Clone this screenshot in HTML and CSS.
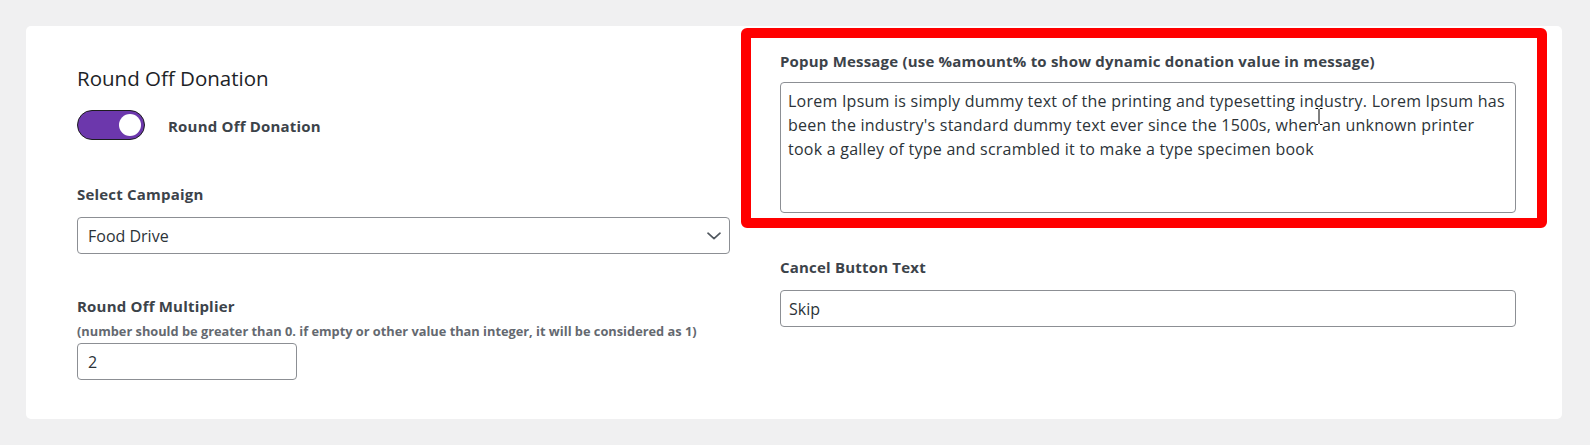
FILE: index.html
```html
<!DOCTYPE html>
<html lang="en">
<head>
  <meta charset="UTF-8" />
  <meta name="viewport" content="width=device-width, initial-scale=1.0" />
  <title>Round Off Donation Settings</title>
  <link rel="stylesheet" href="styles.css">
</head>
<body>
  <div class="settings-card">
    <div class="col col-left">
      <h2 class="section-title">Round Off Donation</h2>

      <div class="toggle-row">
        <label class="switch">
          <input type="checkbox" checked>
          <span class="knob"></span>
        </label>
        <span class="toggle-label">Round Off Donation</span>
      </div>

      <div class="field field-campaign">
        <label class="field-label" for="campaign">Select Campaign</label>
        <div class="select-wrap">
          <select id="campaign">
            <option>Food Drive</option>
            <option>Clean Water</option>
            <option>School Supplies</option>
          </select>
          <svg class="chevron" width="14" height="8" viewBox="0 0 14 8">
            <path d="M1 1.2 L7 6.6 L13 1.2" fill="none" stroke="#50575e" stroke-width="1.7" stroke-linecap="round" stroke-linejoin="round"/>
          </svg>
        </div>
      </div>

      <div class="field field-multiplier">
        <label class="field-label" for="multiplier">Round Off Multiplier</label>
        <p class="hint">(number should be greater than 0. if empty or other value than integer, it will be considered as 1)</p>
        <input id="multiplier" class="input input-small" type="text" value="2">
      </div>
    </div>

    <div class="col col-right">
      <div class="field">
        <label class="field-label" for="popup-message">Popup Message (use %amount% to show dynamic donation value in message)</label>
        <textarea id="popup-message" class="textarea">Lorem Ipsum is simply dummy text of the printing and typesetting industry. Lorem Ipsum has been the industry's standard dummy text ever since the 1500s, when an unknown printer took a galley of type and scrambled it to make a type specimen book</textarea>
      </div>

      <div class="field field-cancel">
        <label class="field-label" for="cancel-text">Cancel Button Text</label>
        <input id="cancel-text" class="input input-wide" type="text" value="Skip">
      </div>
    </div>

    <!-- highlight frame around the popup message setting -->
    <div class="highlight"></div>

    <!-- text cursor resting over the message box -->
    <svg class="text-cursor" width="8" height="17" viewBox="0 0 8 17">
      <path d="M0.5 0.5 H3 M5 0.5 H7.5 M4 1 V16 M0.5 16.5 H3 M5 16.5 H7.5" stroke="#fff" stroke-width="2.4" fill="none"/>
      <path d="M0.5 0.5 H3 M5 0.5 H7.5 M4 1 V16 M0.5 16.5 H3 M5 16.5 H7.5" stroke="#000" stroke-width="1" fill="none"/>
    </svg>
  </div>
</body>
</html>
```
FILE: styles.css
```css
body {
  font-family: 'Open Sans', 'Noto Sans', sans-serif;
  margin: 0;
  padding: 26px 28px 26px 26px;
  background: #f0f0f1;
  color: #3c434a;
}

.settings-card {
  position: relative;
  display: grid;
  grid-template-columns: 653px 736px;
  column-gap: 50px;
  align-items: start;
  padding: 0 46px 39px 51px;
  background: #fff;
  border-radius: 5px;
}

.col-left {
  padding-top: 38px;
}

.col-right {
  padding-top: 25px;
}

.section-title {
  margin: 0;
  font-size: 20.5px;
  font-weight: 400;
  line-height: 28px;
  color: #1d2327;
}

/* toggle switch */
.toggle-row {
  display: flex;
  align-items: center;
  margin-top: 18px;
}

.switch {
  display: flex;
  align-items: center;
  justify-content: flex-end;
  box-sizing: border-box;
  width: 68px;
  height: 30px;
  padding: 0 3px;
  background: #6c37ac;
  border: 1px solid #1d1d1f;
  border-radius: 15px;
  cursor: pointer;
}

.switch input {
  display: none;
}

.knob {
  width: 22px;
  height: 22px;
  border-radius: 50%;
  background: #fff;
}

.toggle-label {
  margin-left: 23px;
  padding-top: 2px;
  font-size: 15px;
  font-weight: 700;
  letter-spacing: 0.2px;
  line-height: 20px;
}

/* fields */
.field-label {
  display: block;
  font-size: 15px;
  font-weight: 700;
  letter-spacing: 0.2px;
  line-height: 20px;
  color: #3c434a;
}

.field-campaign {
  margin-top: 44px;
}

.field-multiplier {
  margin-top: 42px;
}

.field-cancel {
  margin-top: 44px;
}

.hint {
  margin: 6px 0 0;
  font-size: 12.8px;
  font-weight: 700;
  line-height: 18px;
  color: #646970;
}

.select-wrap {
  position: relative;
  margin-top: 13px;
}

.select-wrap select {
  display: block;
  box-sizing: border-box;
  width: 100%;
  height: 37px;
  padding: 0 30px 0 10px;
  font-family: inherit;
  font-size: 16px;
  color: #2c3338;
  background: #fff;
  border: 1px solid #8c8f94;
  border-radius: 4px;
  appearance: none;
  -webkit-appearance: none;
}

.chevron {
  position: absolute;
  right: 9px;
  top: 50%;
  transform: translateY(-50%);
  pointer-events: none;
}

.input {
  display: block;
  box-sizing: border-box;
  height: 37px;
  font-family: inherit;
  font-size: 16px;
  color: #2c3338;
  background: #fff;
  border: 1px solid #8c8f94;
  border-radius: 4px;
  outline: none;
}

.input-small {
  width: 220px;
  margin-top: 3px;
  padding: 0 10px;
}

.input-wide {
  width: 100%;
  margin-top: 13px;
  padding: 0 8px;
}

.textarea {
  display: block;
  box-sizing: border-box;
  width: 100%;
  height: 131px;
  margin-top: 11px;
  padding: 6px 7px 4px;
  font-family: inherit;
  font-size: 16px;
  letter-spacing: 0.24px;
  line-height: 24px;
  color: #2c3338;
  background: #fff;
  border: 1px solid #8c8f94;
  border-radius: 4px;
  resize: none;
  outline: none;
}

.highlight {
  position: absolute;
  left: 715px;
  top: 2px;
  box-sizing: border-box;
  width: 806px;
  height: 200px;
  border: 10px solid #ff0000;
  border-radius: 6px;
  pointer-events: none;
}

.text-cursor {
  position: absolute;
  left: 1289px;
  top: 82px;
  pointer-events: none;
}
```
